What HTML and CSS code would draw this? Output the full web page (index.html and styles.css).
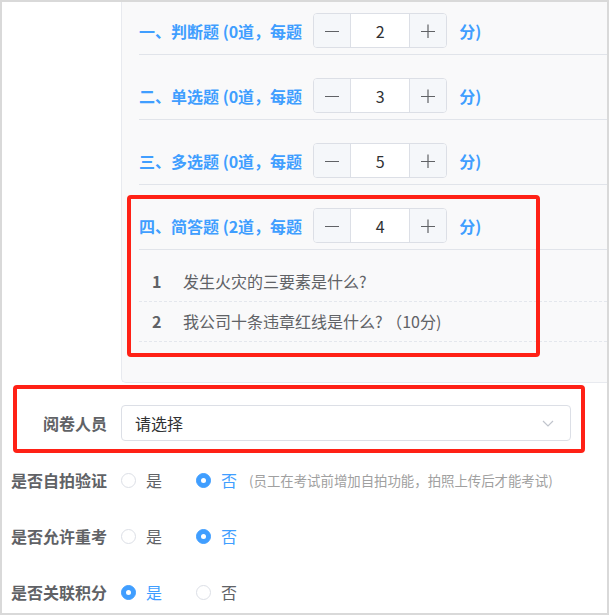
FILE: index.html
```html
<!DOCTYPE html>
<html lang="zh-CN">
<head>
    <meta charset="UTF-8">
    <meta name="viewport" content="width=device-width, initial-scale=1.0">
    <title>试卷设置</title>
    <link rel="stylesheet" href="styles.css">
</head>
<body>
    <div class="frame">
        <!-- 题型分值 -->
        <div class="panel-item">
            <div class="panel">
                <div class="group-head first">
                    <span class="group-title">一、判断题 (0道，每题</span>
                    <div class="stepper">
                        <span class="step-btn"><svg width="14" height="14" viewBox="0 0 14 14"><path d="M0 7.5 H14" stroke="#606266" stroke-width="1.2"/></svg></span>
                        <span class="step-val">2</span>
                        <span class="step-btn plus"><svg width="14" height="14" viewBox="0 0 14 14"><path d="M0 7.5 H14 M7 0.5 V14.5" stroke="#606266" stroke-width="1.2"/></svg></span>
                    </div>
                    <span class="group-tail">分)</span>
                </div>
                <div class="group-head">
                    <span class="group-title">二、单选题 (0道，每题</span>
                    <div class="stepper">
                        <span class="step-btn"><svg width="14" height="14" viewBox="0 0 14 14"><path d="M0 7.5 H14" stroke="#606266" stroke-width="1.2"/></svg></span>
                        <span class="step-val">3</span>
                        <span class="step-btn plus"><svg width="14" height="14" viewBox="0 0 14 14"><path d="M0 7.5 H14 M7 0.5 V14.5" stroke="#606266" stroke-width="1.2"/></svg></span>
                    </div>
                    <span class="group-tail">分)</span>
                </div>
                <div class="group-head">
                    <span class="group-title">三、多选题 (0道，每题</span>
                    <div class="stepper">
                        <span class="step-btn"><svg width="14" height="14" viewBox="0 0 14 14"><path d="M0 7.5 H14" stroke="#606266" stroke-width="1.2"/></svg></span>
                        <span class="step-val">5</span>
                        <span class="step-btn plus"><svg width="14" height="14" viewBox="0 0 14 14"><path d="M0 7.5 H14 M7 0.5 V14.5" stroke="#606266" stroke-width="1.2"/></svg></span>
                    </div>
                    <span class="group-tail">分)</span>
                </div>
                <div class="group-head">
                    <span class="group-title">四、简答题 (2道，每题</span>
                    <div class="stepper">
                        <span class="step-btn"><svg width="14" height="14" viewBox="0 0 14 14"><path d="M0 7.5 H14" stroke="#606266" stroke-width="1.2"/></svg></span>
                        <span class="step-val">4</span>
                        <span class="step-btn plus"><svg width="14" height="14" viewBox="0 0 14 14"><path d="M0 7.5 H14 M7 0.5 V14.5" stroke="#606266" stroke-width="1.2"/></svg></span>
                    </div>
                    <span class="group-tail">分)</span>
                </div>
                <ul class="question-list">
                    <li><span class="q-num">1</span>发生火灾的三要素是什么?</li>
                    <li><span class="q-num">2</span>我公司十条违章红线是什么? （10分)</li>
                </ul>
            </div>
        </div>

        <!-- 阅卷人员 -->
        <div class="form-item select-item">
            <label class="form-label">阅卷人员</label>
            <div class="select">
                <span>请选择</span>
                <svg class="arrow" width="12" height="7" viewBox="0 0 12 7">
                    <path d="M1 1 L6 6 L11 1" fill="none" stroke="#c0c4cc" stroke-width="1.2"/>
                </svg>
            </div>
        </div>

        <div class="form-item">
            <label class="form-label">是否自拍验证</label>
            <div class="radios">
                <span class="radio"><span class="dot"></span>是</span>
                <span class="radio checked"><span class="dot"></span>否</span>
                <span class="hint">(员工在考试前增加自拍功能，拍照上传后才能考试)</span>
            </div>
        </div>

        <div class="form-item">
            <label class="form-label">是否允许重考</label>
            <div class="radios">
                <span class="radio"><span class="dot"></span>是</span>
                <span class="radio checked"><span class="dot"></span>否</span>
            </div>
        </div>

        <div class="form-item">
            <label class="form-label">是否关联积分</label>
            <div class="radios">
                <span class="radio checked"><span class="dot"></span>是</span>
                <span class="radio"><span class="dot"></span>否</span>
            </div>
        </div>

        <!-- 标注框 -->
        <div class="mark mark-questions"></div>
        <div class="mark mark-reviewer"></div>
    </div>
</body>
</html>
```

FILE: styles.css
```css
body {
    margin: 0;
    font-family: "Noto Sans CJK SC", "Liberation Sans", sans-serif;
    background: #fff;
}
.frame {
    position: relative;
    width: 609px;
    height: 615px;
    box-sizing: border-box;
    border: 2px solid #d9d9d9;
    overflow: hidden;
    background: #fff;
}

/* 题型面板 */
.panel-item {
    padding-left: 119px;
}
.panel {
    background: #f9f9fa;
    border-left: 1px solid #e8eaef;
    border-bottom: 1px solid #e8eaef;
    border-radius: 0 0 0 5px;
    padding-left: 17px;
}
.group-head {
    display: flex;
    align-items: center;
    padding: 23px 0 6px;
    border-bottom: 1px solid #e1e4ea;
}
.group-head.first {
    padding-top: 11px;
}
.group-title {
    font-size: 16px;
    font-weight: bold;
    color: #409eff;
    margin-right: 11px;
    white-space: nowrap;
}
.group-tail {
    font-size: 16px;
    font-weight: bold;
    color: #409eff;
    margin-left: 12px;
}
.stepper {
    display: flex;
    width: 134px;
    height: 35px;
    box-sizing: border-box;
    border: 1px solid #dcdfe6;
    border-radius: 4px;
    overflow: hidden;
    background: #fff;
}
.step-btn {
    width: 36px;
    background: #f5f7fa;
    border-right: 1px solid #dcdfe6;
    display: flex;
    align-items: center;
    justify-content: center;
}
.step-btn.plus {
    border-right: none;
    border-left: 1px solid #dcdfe6;
}
.step-val {
    flex: 1;
    display: flex;
    align-items: center;
    justify-content: center;
    font-size: 16px;
    color: #303133;
}
.question-list {
    list-style: none;
    margin: 0;
    padding: 12px 0 40px;
}
.question-list li {
    height: 39px;
    line-height: 39px;
    border-bottom: 1px dashed #e4e7ed;
    font-size: 16px;
    color: #606266;
    padding-left: 13px;
}
.q-num {
    display: inline-block;
    width: 31px;
    font-weight: bold;
}

/* 表单项 */
.form-item {
    display: flex;
    align-items: center;
    height: 36px;
    margin-top: 20px;
}
.select-item {
    margin-top: 22px;
}
.select-item + .form-item {
    margin-top: 21px;
}
.form-label {
    width: 119px;
    box-sizing: border-box;
    padding-right: 14px;
    text-align: right;
    font-size: 16px;
    font-weight: bold;
    color: #606266;
    white-space: nowrap;
}
.select {
    width: 450px;
    height: 36px;
    box-sizing: border-box;
    border: 1px solid #dcdfe6;
    border-radius: 4px;
    padding: 0 16px 0 13px;
    display: flex;
    align-items: center;
    justify-content: space-between;
    font-size: 16px;
    color: #303133;
}
.radios {
    display: flex;
    align-items: center;
    font-size: 16px;
    color: #606266;
}
.radio {
    display: flex;
    align-items: center;
    margin-right: 34px;
}
.dot {
    width: 15px;
    height: 15px;
    box-sizing: border-box;
    border: 1px solid #dcdfe6;
    border-radius: 50%;
    background: #fff;
    margin-right: 10px;
    position: relative;
}
.radio.checked {
    color: #409eff;
}
.radio.checked .dot {
    border-color: #409eff;
    background: #409eff;
}
.radio.checked .dot::after {
    content: "";
    position: absolute;
    left: 4px;
    top: 4px;
    width: 5px;
    height: 5px;
    border-radius: 50%;
    background: #fff;
}
.radios .radio:nth-child(2) {
    margin-right: 12px;
}
.hint {
    font-size: 13.4px;
    color: #a0a0a0;
}

/* 红色标注框 */
.mark {
    position: absolute;
    border: 4px solid #ff2116;
    border-radius: 4px;
    box-sizing: border-box;
}
.mark-questions {
    left: 125px;
    top: 193px;
    width: 413px;
    height: 162px;
}
.mark-reviewer {
    left: 11px;
    top: 383px;
    width: 572px;
    height: 68px;
}
```
